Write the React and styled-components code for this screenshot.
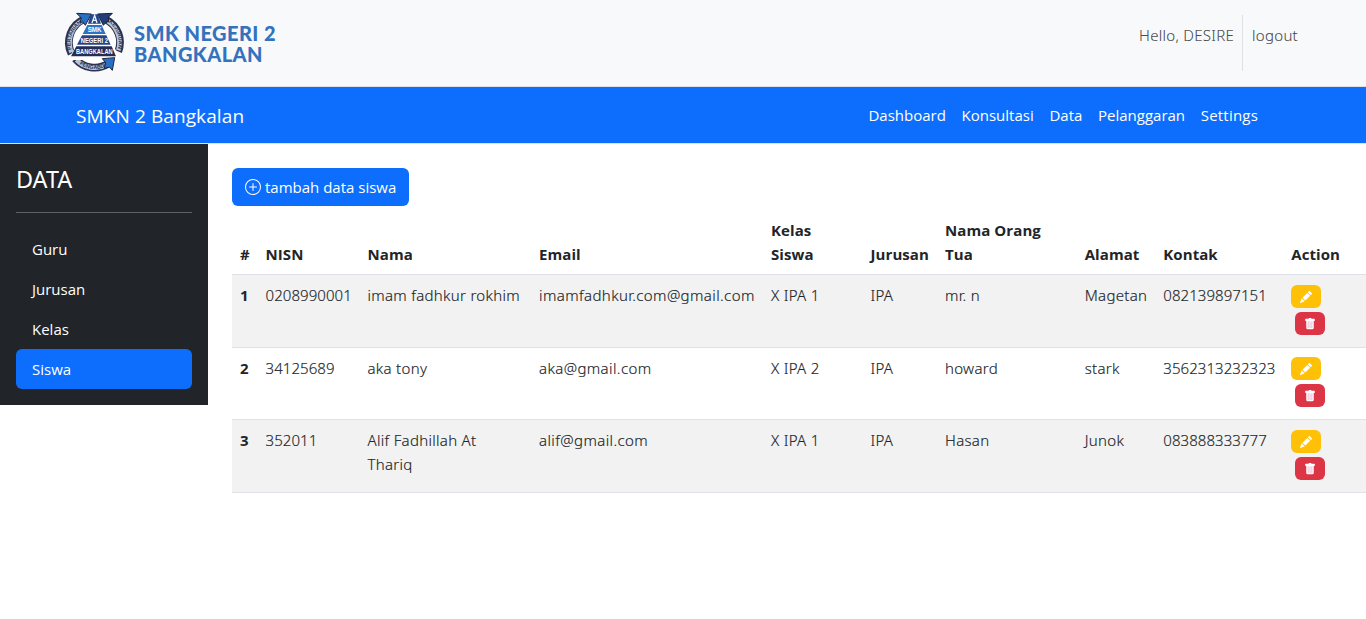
import React from 'react';
import styled, { createGlobalStyle } from 'styled-components';

const GlobalStyle = createGlobalStyle`
  *, *::before, *::after { box-sizing: border-box; }
  html, body { overflow: hidden; }
  body {
    margin: 0;
    background: #fff;
    color: #212529;
    font-family: "Open Sans", "Noto Sans", sans-serif;
    font-size: 15px;
    line-height: 24px;
  }
  a { color: inherit; text-decoration: none; }
`;

const TopBar = styled.header`
  display: flex;
  justify-content: space-between;
  height: 87px;
  padding: 8px 60px;
  background: #f8f9fa;
  border-bottom: 1px solid #dee2e6;
`;
const Brand = styled.a`
  display: flex;
  gap: 4px;
`;
const Emblem = styled.svg`
  width: 70px;
  height: 70px;
`;
const BrandName = styled.div`
  padding-top: 15px;
  color: #3572bd;
  font: 900 20px/21px Lato, sans-serif;
  letter-spacing: 0.45px;
  white-space: nowrap;
`;
const BrandLine = styled.div`
  height: 21px;
`;
const Account = styled.div`
  display: flex;
  height: 56px;
  margin-top: 7px;
  color: rgba(0, 0, 0, 0.7);
  font-family: "Noto Sans", sans-serif;
  font-weight: 300;
  letter-spacing: 0.28px;
  white-space: nowrap;
  -webkit-text-stroke: 0.15px;
`;
const AccountItem = styled.a`
  padding: 8px 8px 0 7px;
  & + & {
    padding-left: 9px;
    border-left: 1px solid #dee2e6;
  }
`;

const NavBar = styled.nav`
  display: flex;
  align-items: center;
  justify-content: space-between;
  height: 57px;
  padding: 0 108px 0 76px;
  background: #0d6efd;
  border-bottom: 1px solid #dee2e6;
  color: #fff;
`;
const NavBrand = styled.a`
  font-size: 19px;
  letter-spacing: 0.1px;
  padding-top: 2px;
`;
const NavLinks = styled.div`
  display: flex;
  gap: 15.7px;
  padding-bottom: 1px;
`;
const NavLink = styled.a`
  letter-spacing: ${(p) => (p.$wide ? '0.2px' : '0')};
`;

const Body = styled.div`
  display: flex;
  align-items: flex-start;
`;
const Sidebar = styled.aside`
  flex: none;
  width: 208px;
  height: 261px;
  padding: 16px;
  background: #212529;
  color: #fff;
`;
const SideTitle = styled.h1`
  margin: 0;
  height: 52px;
  font: 400 23.4px/39px "Noto Sans", sans-serif;
`;
const Divider = styled.hr`
  height: 1px;
  margin: 0 0 16px;
  border: 0;
  background: #615e66;
`;
const SideLink = styled.a`
  display: block;
  height: 40px;
  padding: 8px 16px 0;
  border-radius: 6px;
  background: ${(p) => (p.$active ? '#0d6efd' : 'transparent')};
`;

const Main = styled.main`
  flex: 1;
  min-width: 0;
  padding: 24px 0 0 24px;
`;
const AddButton = styled.button`
  display: flex;
  align-items: center;
  gap: 4px;
  width: 177px;
  height: 38px;
  margin: 0 0 4px;
  padding: 0 0 1px 13px;
  border: 0;
  border-radius: 6px;
  background: #0d6efd;
  color: #fff;
  font: inherit;
  white-space: nowrap;
`;
const ButtonIcon = styled.svg`
  width: 16px;
  height: 16px;
`;

const Table = styled.table`
  width: 1134px;
  table-layout: fixed;
  border-collapse: separate;
  border-spacing: 0;
`;
const Col = styled.col`
  width: ${(p) => p.$width}px;
`;
const Row = styled.tr`
  height: ${(p) => p.$height}px;
  background: ${(p) => (p.$striped ? '#f2f2f2' : '#fff')};
`;
const HeadCell = styled.th`
  padding: 8px 0 8px 8px;
  border-bottom: 1px solid #dee2e6;
  text-align: left;
  vertical-align: ${(p) => (p.$top ? 'top' : 'bottom')};
  font-weight: 700;
  letter-spacing: 0.08px;
  white-space: nowrap;
`;
const Cell = styled.td`
  padding: 8px 8px 0;
  border-bottom: 1px solid #dee2e6;
  vertical-align: top;
  font-family: "Noto Sans", sans-serif;
  font-weight: 300;
  letter-spacing: ${(p) => (p.$numeric ? '0.06px' : p.$loose ? '0.4px' : '0.3px')};
  -webkit-text-stroke: 0.15px;
`;
const Actions = styled.div`
  display: flex;
  flex-direction: column;
  gap: 4px;
  padding-top: ${(p) => p.$offset}px;
`;
const Badge = styled.button`
  display: grid;
  place-items: center;
  width: 30px;
  height: 23px;
  margin-left: ${(p) => (p.$danger ? 4 : 0)}px;
  padding: 0;
  border: 0;
  border-radius: 6px;
  background: ${(p) => (p.$danger ? '#dc3545' : '#ffc107')};
  color: #fff;
`;
const BadgeIcon = styled.svg`
  width: 12px;
  height: 12px;
`;

function Logo() {
  const label = { fontFamily: 'Liberation Sans', fontWeight: 700, fill: '#fff', textAnchor: 'middle' };
  return (
    <Emblem viewBox="0 0 210 210">
      <g transform="translate(7.5 5) scale(.93)">
        <circle cx="103" cy="106" r="76" fill="#fff" />
        <g fill="none" stroke="#2c3350" strokeWidth="25">
          <path d="M29 142A82 82 0 0 1 71 30" />
          <path d="M180 135A82 82 0 0 0 142 33" />
          <path d="M41 158A82 82 0 0 0 148 174" />
        </g>
        <g fill="none" stroke="#b9c4d6" strokeWidth="15">
          <path d="M29 138A82 82 0 0 1 66 34" />
          <path d="M180 131A82 82 0 0 0 146 37" />
          <path d="M45 162A82 82 0 0 0 142 178" />
        </g>
        <defs>
          <path id="arcLeft" d="M34 140A76 76 0 0 1 72 37" />
          <path id="arcRight" d="M139 35A76 76 0 0 1 174 136" />
          <path id="arcBottom" d="M50 173A88 88 0 0 0 145 181" />
        </defs>
        <g {...label} fill="#26345c" fontSize="17">
          <text><textPath href="#arcLeft" startOffset="50%">PERTANIAN</textPath></text>
          <text><textPath href="#arcRight" startOffset="50%">KEJURUAN</textPath></text>
          <text><textPath href="#arcBottom" startOffset="50%">PENGABDI</textPath></text>
        </g>
      </g>
      <path d="M105 14L24 156H184Z" fill="#fff" />
      <path d="M50 16L94 18L76 52L69 42L60 43L64 30Z" fill="#2870c4" stroke="#1d2443" strokeWidth="3" />
      <path d="M157 16L113 18L130 52L139 42L147 41L144 29Z" fill="#243c78" stroke="#1a2140" strokeWidth="3" />
      <path d="M127 152L164 149L157 187L148 177L133 181L137 164Z" fill="#2870c4" stroke="#1d2443" strokeWidth="3" />
      <path d="M92 19H114L123 47H84Z" fill="#26458c" />
      <path d="M96 45L104 22L111 45M99 37H109" fill="none" stroke="#e9f1fb" strokeWidth="4" />
      <path d="M82 51H125L137 78H68Z" fill="#2d73c4" />
      <path d="M66 82H139L152 110H51Z" fill="#25458a" />
      <path d="M49 115H155L168 145H33Z" fill="#222d58" />
      <g {...label}>
        <text x="104" y="72" fontSize="20" textLength="42" lengthAdjust="spacingAndGlyphs">SMK</text>
        <text x="103" y="104" fontSize="20" textLength="82" lengthAdjust="spacingAndGlyphs">NEGERI 2</text>
        <text x="103" y="138" fontSize="21" textLength="110" lengthAdjust="spacingAndGlyphs">BANGKALAN</text>
      </g>
    </Emblem>
  );
}

function PlusCircle() {
  return (
    <ButtonIcon viewBox="0 0 16 16" fill="currentColor">
      <path d="M8 15A7 7 0 1 1 8 1a7 7 0 0 1 0 14m0 1A8 8 0 1 0 8 0a8 8 0 0 0 0 16" />
      <path d="M8 4a.5.5 0 0 1 .5.5v3h3a.5.5 0 0 1 0 1h-3v3a.5.5 0 0 1-1 0v-3h-3a.5.5 0 0 1 0-1h3v-3A.5.5 0 0 1 8 4" />
    </ButtonIcon>
  );
}

function Pencil() {
  return (
    <BadgeIcon viewBox="0 0 16 16" fill="currentColor">
      <path d="M12.854.146a.5.5 0 0 0-.707 0L10.5 1.793 14.207 5.5l1.647-1.646a.5.5 0 0 0 0-.708zm.646 6.061L9.793 2.5 3.293 9H3.5a.5.5 0 0 1 .5.5v.5h.5a.5.5 0 0 1 .5.5v.5h.5a.5.5 0 0 1 .5.5v.5h.5a.5.5 0 0 1 .5.5v.207zm-7.468 7.468A.5.5 0 0 1 6 13.5V13h-.5a.5.5 0 0 1-.5-.5V12h-.5a.5.5 0 0 1-.5-.5V11h-.5a.5.5 0 0 1-.5-.5V10h-.5a.5.5 0 0 1-.175-.032l-.179.178a.5.5 0 0 0-.11.168l-2 5a.5.5 0 0 0 .65.65l5-2a.5.5 0 0 0 .168-.11z" />
    </BadgeIcon>
  );
}

function Trash() {
  return (
    <BadgeIcon viewBox="0 0 16 16" fill="currentColor">
      <path d="M2.5 1a1 1 0 0 0-1 1v1a1 1 0 0 0 1 1H3v9a2 2 0 0 0 2 2h6a2 2 0 0 0 2-2V4h.5a1 1 0 0 0 1-1V2a1 1 0 0 0-1-1H10a1 1 0 0 0-1-1H7a1 1 0 0 0-1 1z" />
      <path d="M5.5 5v8M8 5v8M10.5 5v8" fill="none" stroke="#e3a3c8" strokeLinecap="round" />
    </BadgeIcon>
  );
}

const links = ['Dashboard', 'Konsultasi', 'Data', 'Pelanggaran', 'Settings'];
const sections = ['Guru', 'Jurusan', 'Kelas', 'Siswa'];
const columns = [
  { title: '#', width: 25.5 },
  { title: 'NISN', width: 102 },
  { title: 'Nama', width: 171.5 },
  { title: 'Email', width: 232 },
  { title: <>Kelas<br />Siswa</>, width: 99.5 },
  { title: 'Jurusan', width: 74.5 },
  { title: <>Nama Orang<br />Tua</>, width: 139.7 },
  { title: 'Alamat', width: 78.6 },
  { title: 'Kontak', width: 128 },
  { title: 'Action', width: 82.7 },
];
const students = [
  { nisn: '0208990001', name: 'imam fadhkur rokhim', email: 'imamfadhkur.com@gmail.com', grade: 'X IPA 1', major: 'IPA', parent: 'mr. n', address: 'Magetan', phone: '082139897151', height: 73, offset: 2 },
  { nisn: '34125689', name: 'aka tony', email: 'aka@gmail.com', grade: 'X IPA 2', major: 'IPA', parent: 'howard', address: 'stark', phone: '3562313232323', height: 72, offset: 1 },
  { nisn: '352011', name: 'Alif Fadhillah At Thariq', email: 'alif@gmail.com', grade: 'X IPA 1', major: 'IPA', parent: 'Hasan', address: 'Junok', phone: '083888333777', height: 73, offset: 2 },
];

export default function App() {
  return (
    <>
      <GlobalStyle />
      <TopBar>
        <Brand href="#">
          <Logo />
          <BrandName>
            <BrandLine>SMK NEGERI 2</BrandLine>
            <BrandLine>BANGKALAN</BrandLine>
          </BrandName>
        </Brand>
        <Account>
          <AccountItem>Hello, DESIRE</AccountItem>
          <AccountItem href="#">logout</AccountItem>
        </Account>
      </TopBar>
      <NavBar>
        <NavBrand href="#">SMKN 2 Bangkalan</NavBrand>
        <NavLinks>
          {links.map((l) => <NavLink key={l} href="#" $wide={l === 'Settings'}>{l}</NavLink>)}
        </NavLinks>
      </NavBar>
      <Body>
        <Sidebar>
          <SideTitle>DATA</SideTitle>
          <Divider />
          {sections.map((s) => (
            <SideLink key={s} href="#" $active={s === 'Siswa'}>{s}</SideLink>
          ))}
        </Sidebar>
        <Main>
          <AddButton><PlusCircle />tambah data siswa</AddButton>
          <Table>
            <colgroup>
              {columns.map((c, i) => <Col key={i} $width={c.width} />)}
            </colgroup>
            <thead>
              <Row $height={65}>
                {columns.map((c, i) => <HeadCell key={i}>{c.title}</HeadCell>)}
              </Row>
            </thead>
            <tbody>
              {students.map((s, i) => (
                <Row key={s.nisn} $height={s.height} $striped={i % 2 === 0}>
                  <HeadCell $top>{i + 1}</HeadCell>
                  <Cell $numeric>{s.nisn}</Cell>
                  <Cell>{s.name}</Cell>
                  <Cell $loose>{s.email}</Cell>
                  <Cell>{s.grade}</Cell>
                  <Cell>{s.major}</Cell>
                  <Cell>{s.parent}</Cell>
                  <Cell>{s.address}</Cell>
                  <Cell $numeric>{s.phone}</Cell>
                  <Cell>
                    <Actions $offset={s.offset}>
                      <Badge><Pencil /></Badge>
                      <Badge $danger><Trash /></Badge>
                    </Actions>
                  </Cell>
                </Row>
              ))}
            </tbody>
          </Table>
        </Main>
      </Body>
    </>
  );
}
